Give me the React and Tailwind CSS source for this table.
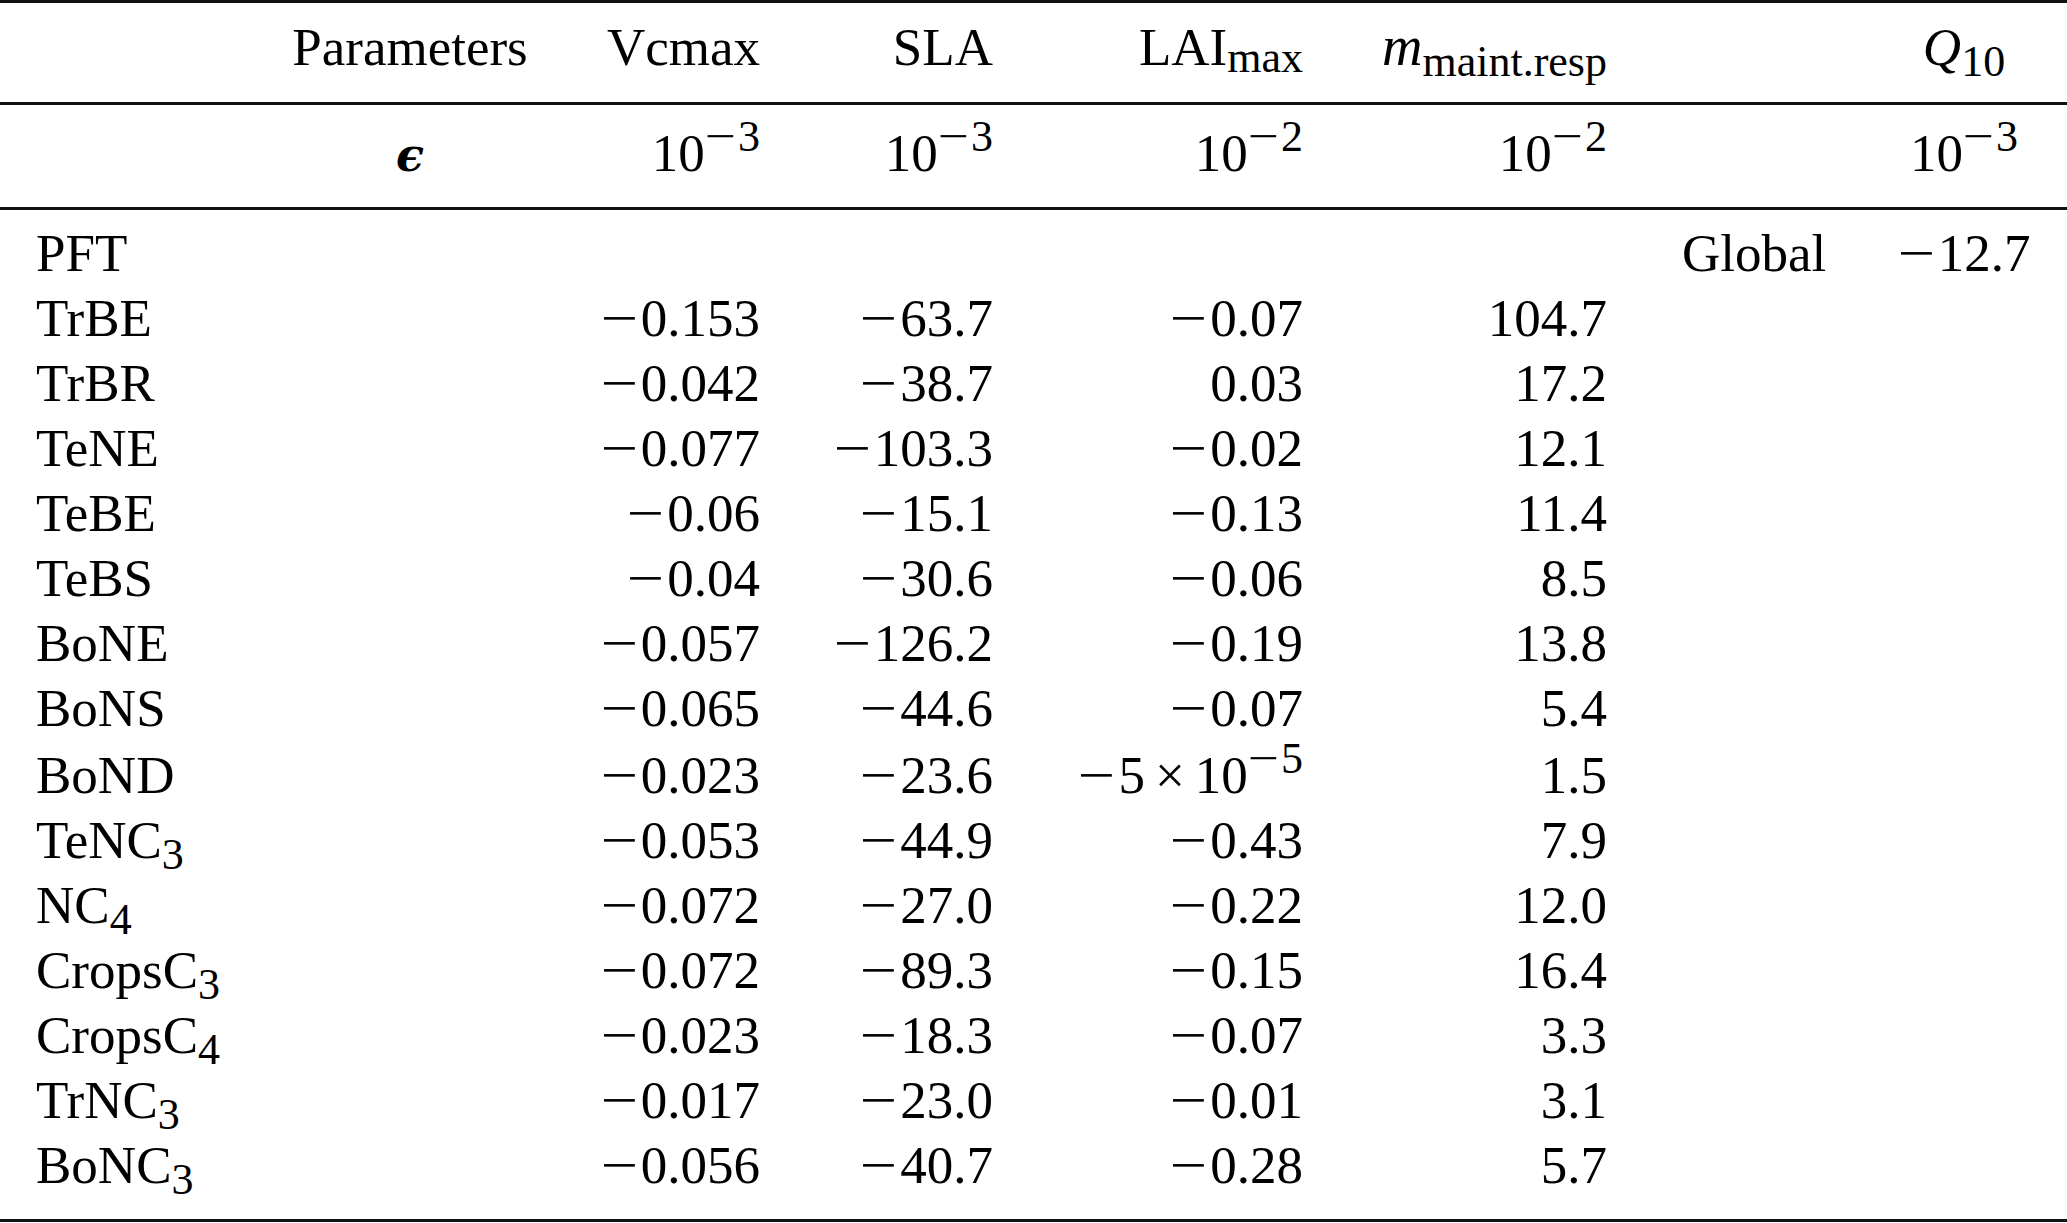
import React from "react";

// column grid shared by every row of the table
const COLS =
  "grid grid-cols-[560px_200px_233px_310px_304px_263px_188px] whitespace-nowrap";

const rows = [
  ["TrBE", "−0.153", "−63.7", "−0.07", "104.7"],
  ["TrBR", "−0.042", "−38.7", "0.03", "17.2"],
  ["TeNE", "−0.077", "−103.3", "−0.02", "12.1"],
  ["TeBE", "−0.06", "−15.1", "−0.13", "11.4"],
  ["TeBS", "−0.04", "−30.6", "−0.06", "8.5"],
  ["BoNE", "−0.057", "−126.2", "−0.19", "13.8"],
  ["BoNS", "−0.065", "−44.6", "−0.07", "5.4"],
  ["BoND", "−0.023", "−23.6", "tiny", "1.5"],
  [["TeNC", "3"], "−0.053", "−44.9", "−0.43", "7.9"],
  [["NC", "4"], "−0.072", "−27.0", "−0.22", "12.0"],
  [["CropsC", "3"], "−0.072", "−89.3", "−0.15", "16.4"],
  [["CropsC", "4"], "−0.023", "−18.3", "−0.07", "3.3"],
  [["TrNC", "3"], "−0.017", "−23.0", "−0.01", "3.1"],
  [["BoNC", "3"], "−0.056", "−40.7", "−0.28", "5.7"],
];

// math minus is wider than the text one
const Minus = () => (
  <span className="inline-block w-[0.755em] text-left">
    <span className="inline-block origin-left scale-x-[1.25]">−</span>
  </span>
);

const Num = ({ v }) =>
  v.startsWith("−") ? (
    <>
      <Minus />
      {v.slice(1)}
    </>
  ) : (
    v
  );

const Sup = ({ children }) => (
  <span className="relative -top-[20px] text-[44px] leading-[0]">{children}</span>
);

const Sub = ({ children, drop = "top-[11px]" }) => (
  <span className={`relative ${drop} text-[44px] leading-[0]`}>{children}</span>
);

const Pow = ({ e }) => (
  <>
    10
    <Sup>
      <Num v={e} />
    </Sup>
  </>
);

const Rule = () => <div className="h-[3px] bg-[#111]" />;

const Label = ({ name }) =>
  Array.isArray(name) ? (
    <>
      {name[0]}
      <Sub>{name[1]}</Sub>
    </>
  ) : (
    name
  );

export default function App() {
  return (
    <div className="w-full bg-white text-black font-['Liberation_Serif','Times_New_Roman',serif] text-[53px]">
      <Rule />

      {/* header */}
      <div className={`${COLS} h-[99px] pt-[12px] leading-[65px]`}>
        <div className="pl-[260px] text-center">Parameters</div>
        <div className="text-right">Vcmax</div>
        <div className="text-right">SLA</div>
        <div className="text-right">
          LAI<Sub drop="top-[7px]">max</Sub>
        </div>
        <div className="text-right">
          <span className="italic text-[56px] leading-[0]">m</span>
          <Sub>maint.resp</Sub>
        </div>
        <div />
        <div className="text-center">
          <span className="italic">Q</span>
          <Sub>10</Sub>
        </div>
      </div>

      <Rule />

      {/* epsilon row */}
      <div className={`${COLS} h-[102px] pt-[16px] leading-[65px]`}>
        <div className="pl-[260px] text-center">
          <span className="font-['DejaVu_Serif',serif] font-bold italic text-[46px] leading-[0]">
            ϵ
          </span>
        </div>
        <div className="text-right">
          <Pow e="−3" />
        </div>
        <div className="text-right">
          <Pow e="−3" />
        </div>
        <div className="text-right">
          <Pow e="−2" />
        </div>
        <div className="text-right">
          <Pow e="−2" />
        </div>
        <div />
        <div className="text-center">
          <Pow e="−3" />
        </div>
      </div>

      <Rule />

      {/* body */}
      <div className="pt-[11px] pb-[21px]">
        <div className={`${COLS} h-[65px] leading-[65px]`}>
          <div className="pl-[36px]">PFT</div>
          <div />
          <div />
          <div />
          <div />
          <div className="pl-[75px]">Global</div>
          <div className="text-center">
            <Num v="−12.7" />
          </div>
        </div>
        {rows.map((r, i) => {
          const tall = r[3] === "tiny";
          return (
            <div
              key={i}
              className={`${COLS} leading-[65px] ${tall ? "h-[67px] pt-[2px]" : "h-[65px]"}`}
            >
              <div className="pl-[36px]">
                <Label name={r[0]} />
              </div>
              <div className="text-right">
                <Num v={r[1]} />
              </div>
              <div className="text-right">
                <Num v={r[2]} />
              </div>
              <div className="text-right">
                {tall ? (
                  <>
                    <Minus />5<span className="mx-[10px]">×</span>
                    <Pow e="−5" />
                  </>
                ) : (
                  <Num v={r[3]} />
                )}
              </div>
              <div className="text-right">
                <Num v={r[4]} />
              </div>
              <div />
              <div />
            </div>
          );
        })}
      </div>

      <Rule />
    </div>
  );
}
